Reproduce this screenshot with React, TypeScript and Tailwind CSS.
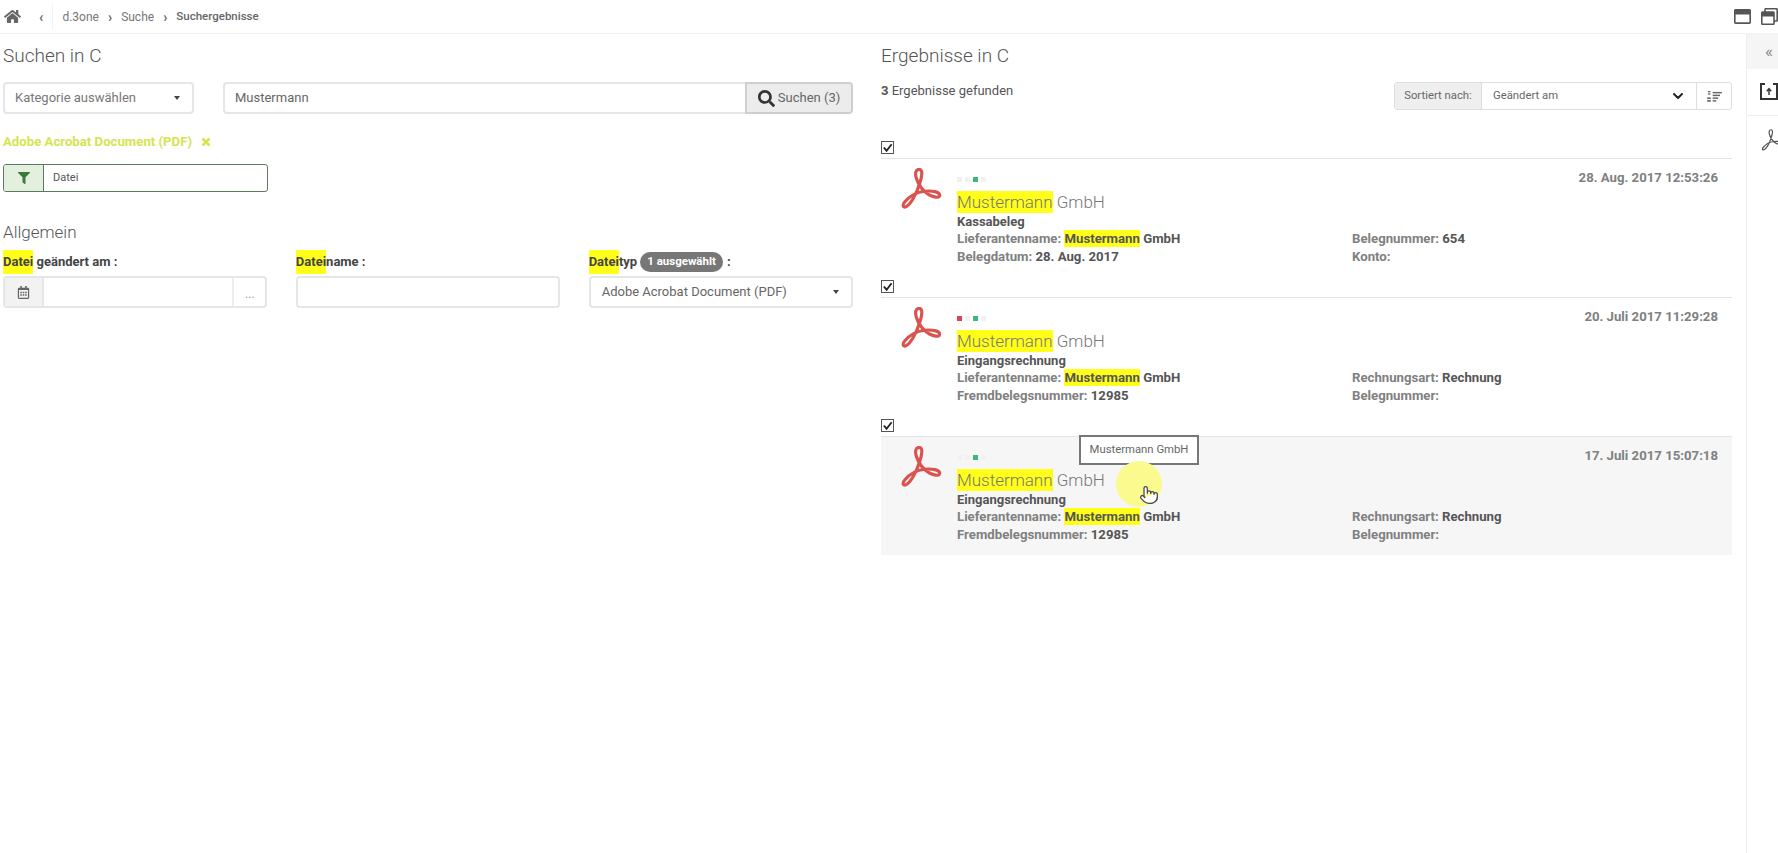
import React from 'react';
import { FaHome, FaFilter, FaSearch, FaRegCalendarAlt, FaRegWindowMaximize, FaRegWindowRestore } from 'react-icons/fa';
import { FiChevronDown } from 'react-icons/fi';
import { Pointer } from 'lucide-react';

const Hl: React.FC<{ children: React.ReactNode; className?: string }> = ({ children, className = 'py-[2px]' }) => (
  <span className={`bg-[#ffff1a] ${className}`}>{children}</span>
);

const AcrobatIcon: React.FC<{ className?: string; width?: number }> = ({ className, width = 3.400 }) => (
  <svg viewBox="0 0 44 44" fill="none" stroke="currentColor" strokeLinejoin="round" className={className}>
    <path d="M20 1.500C16 1.500 15.500 6 17 11C19 18 25 26 31 29C35 31 41.500 33 42 29.500C42.500 25.500 33 24 26 25C17 26 9 31 4.500 36.500C1.500 40 3 43 6 41.500C11 39 17 28 20.500 17C23 9.500 24.500 1.500 20 1.500Z" strokeWidth={width} />
  </svg>
);

const Dots: React.FC<{ first?: boolean }> = ({ first }) => (
  <div className="flex gap-[3px] h-[5px]">
    <span className={`w-[5px] h-[5px] ${first ? 'bg-[#e0434b]' : 'bg-[#f1f1f1]'}`} />
    <span className="w-[5px] h-[5px] bg-[#f1f1f1]" />
    <span className="w-[5px] h-[5px] bg-[#3cb878]" />
    <span className="w-[5px] h-[5px] bg-[#f1f1f1]" />
  </div>
);

type ResultRow = {
  date: string;
  kind: string;
  left: string;
  leftValue: string;
  right1: string;
  right1Value: string;
  right2: string;
  redDot?: boolean;
  hover?: boolean;
};

const rows: ResultRow[] = [
  { date: '28. Aug. 2017 12:53:26', kind: 'Kassabeleg', left: 'Belegdatum:', leftValue: '28. Aug. 2017', right1: 'Belegnummer:', right1Value: '654', right2: 'Konto:' },
  { date: '20. Juli 2017 11:29:28', kind: 'Eingangsrechnung', left: 'Fremdbelegsnummer:', leftValue: '12985', right1: 'Rechnungsart:', right1Value: 'Rechnung', right2: 'Belegnummer:', redDot: true },
  { date: '17. Juli 2017 15:07:18', kind: 'Eingangsrechnung', left: 'Fremdbelegsnummer:', leftValue: '12985', right1: 'Rechnungsart:', right1Value: 'Rechnung', right2: 'Belegnummer:', hover: true },
];

const Result: React.FC<{ row: ResultRow }> = ({ row }) => (
  <div>
    <div className="h-[29px] pt-[11px] border-b border-[#e4e4e4]">
      <div className="w-[13px] h-[13px] border border-[#555] bg-white flex items-center justify-center">
        <svg viewBox="0 0 12 12" className="w-[11px] h-[11px]"><path d="M2 6l3 3.500L10.500 2.500" fill="none" stroke="#222" strokeWidth="2" /></svg>
      </div>
    </div>
    <div className={`relative flex h-[118px] mb-[-8px] pt-[8px] ${row.hover ? 'bg-[#f6f6f7]' : ''}`}>
      <div className="w-[76px] pl-[19px] pt-[1px]">
        <AcrobatIcon className="w-[42px] h-[41px] text-[#d9534f]" />
      </div>
      <div className="flex-1 pt-[10px] pr-[14px] relative">
        <Dots first={row.redDot} />
        <div className="absolute right-[14px] top-[2px] text-[13.200px] font-bold text-[#808080] leading-[18px]">{row.date}</div>
        <div className="mt-[8px] text-[17px] font-light text-[#777] leading-[24px]"><Hl className="py-[1px]">Mustermann</Hl> GmbH</div>
        <div className="text-[13px] font-bold text-[#555] leading-[16px]">{row.kind}</div>
        <div className="grid grid-cols-[395px_1fr] text-[13.200px] font-bold leading-[18px]">
          <div className="text-[#808080]">Lieferantenname: <span className="text-[#555]"><Hl className="py-[1px]">Mustermann</Hl> GmbH</span></div>
          <div className="text-[#808080]">{row.right1} <span className="text-[#555]">{row.right1Value}</span></div>
          <div className="text-[#808080]">{row.left} <span className="text-[#555]">{row.leftValue}</span></div>
          <div className="text-[#808080]">{row.right2}</div>
        </div>
      </div>
      {row.hover && (
        <>
          <div className="absolute left-[198px] top-[-2px] w-[120px] h-[30px] bg-white border-2 border-[#777] text-[11.300px] text-[#666] flex items-center justify-center">Mustermann GmbH</div>
          <div className="absolute left-[235px] top-[24px] w-[46px] h-[46px] rounded-full bg-[#fbfa8e]" />
          <Pointer className="absolute left-[258px] top-[47px] w-[20px] h-[22px] text-[#444]" fill="#fff" strokeWidth={1.500} />
        </>
      )}
    </div>
  </div>
);

export default function App() {
  return (
    <div className="w-[1778px] h-[853px] overflow-hidden bg-white flex flex-col font-['Roboto','Liberation_Sans',sans-serif] text-[#555]">
      <div className="h-[34px] shrink-0 flex items-center border-b border-[#f3f3f3] pl-[4px]">
        <FaHome className="w-[17px] h-[15px] text-[#666]" />
        <span className="ml-[18px] text-[14px] text-[#666] font-bold leading-none">‹</span>
        <span className="ml-[9px] w-px h-[26px] bg-[#f3f3f3]" />
        <span className="ml-[9px] text-[12px] text-[#777]">d.3one</span>
        <span className="mx-[9px] text-[14px] text-[#666] font-bold leading-none">›</span>
        <span className="text-[12px] text-[#777]">Suche</span>
        <span className="mx-[9px] text-[14px] text-[#666] font-bold leading-none">›</span>
        <span className="text-[11.500px] text-[#666] font-medium">Suchergebnisse</span>
        <div className="ml-auto flex items-center gap-[10px]">
          <FaRegWindowMaximize className="w-[17px] h-[17px] text-[#555] shrink-0" />
          <FaRegWindowRestore className="w-[17px] h-[17px] text-[#555] shrink-0" />
        </div>
      </div>

      <div className="flex-1 flex">
        <div className="w-[881px] pl-[3px] pr-[28px] pt-[10px]">
          <h2 className="text-[19px] font-light text-[#555] leading-[24px]">Suchen in C</h2>
          <div className="flex mt-[14px] h-[32px]">
            <div className="w-[191px] border-2 border-[#e6e6e6] rounded-[4px] flex items-center pl-[10px] pr-[12px] text-[13px] text-[#777]">
              Kategorie auswählen
              <span className="ml-auto border-x-[3.500px] border-x-transparent border-t-[4px] border-t-[#444]" />
            </div>
            <div className="ml-[29px] flex-1 border-2 border-r-0 border-[#e6e6e6] rounded-l-[4px] flex items-center pl-[10px] text-[13px] text-[#666]">Mustermann</div>
            <div className="w-[108px] border-2 border-[#cfcfcf] bg-[#ececec] rounded-r-[4px] flex items-center justify-center gap-[3px] text-[13px] text-[#666]">
              <FaSearch className="w-[17px] h-[17px] text-[#333]" />
              Suchen (3)
            </div>
          </div>
          <div className="flex items-center mt-[19px] h-[18px] text-[13.200px] font-bold text-[#d6e44f]">
            Adobe Acrobat Document (PDF)
            <svg viewBox="0 0 10 10" className="ml-[9px] w-[10px] h-[10px]"><path d="M1.500 1.500l7 7M8.500 1.500l-7 7" stroke="currentColor" strokeWidth="2.600" /></svg>
          </div>
          <div className="flex mt-[13px] w-[265px] h-[28px] border border-[#5c7a5c] rounded-[3px] overflow-hidden">
            <div className="w-[40px] bg-[#e2f0dd] border-r border-[#5c7a5c] flex items-center justify-center">
              <FaFilter className="w-[12px] h-[12px] text-[#3e7a3e]" />
            </div>
            <div className="pl-[9px] pt-[1px] flex items-center text-[11px] text-[#555]">Datei</div>
          </div>
          <h3 className="mt-[28px] text-[17px] font-light text-[#555] leading-[24px]">Allgemein</h3>
          <div className="grid grid-cols-3 gap-x-[28.500px] mt-[7px]">
            <div>
              <div className="h-[21px] pt-[1px] flex items-center text-[13px] font-bold text-[#444] whitespace-pre"><Hl>Datei</Hl> geändert am :</div>
              <div className="mt-[4px] h-[32px] flex border-2 border-[#e6e6e6] rounded-[4px]">
                <div className="w-[39px] bg-[#f2f2f2] border-r-2 border-[#e6e6e6] flex items-center justify-center">
                  <FaRegCalendarAlt className="w-[13px] h-[13px] text-[#666]" />
                </div>
                <div className="flex-1" />
                <div className="w-[33px] border-l-2 border-[#eeeeee] flex items-center justify-center text-[12px] text-[#999] pt-[4px]">...</div>
              </div>
            </div>
            <div>
              <div className="h-[21px] pt-[1px] flex items-center text-[13px] font-bold text-[#444] whitespace-pre"><Hl>Datei</Hl>name :</div>
              <div className="mt-[4px] h-[32px] border-2 border-[#e6e6e6] rounded-[4px]" />
            </div>
            <div>
              <div className="h-[21px] pt-[1px] flex items-center text-[13px] font-bold text-[#444] whitespace-pre">
                <Hl>Datei</Hl>typ
                <span className="ml-[3px] mr-[4px] h-[20px] px-[7px] rounded-full bg-[#777] text-white text-[11.500px] flex items-center">1 ausgewählt</span>
                :
              </div>
              <div className="mt-[4px] h-[32px] border-2 border-[#e6e6e6] rounded-[4px] flex items-center pl-[11px] pr-[12px] text-[13px] text-[#666]">
                Adobe Acrobat Document (PDF)
                <span className="ml-auto border-x-[3.500px] border-x-transparent border-t-[4px] border-t-[#444]" />
              </div>
            </div>
          </div>
        </div>

        <div className="w-[851px] pt-[10px]">
          <h2 className="text-[19px] font-light text-[#555] leading-[24px]">Ergebnisse in C</h2>
          <div className="flex items-start justify-between mt-[14px] h-[27px]">
            <div className="text-[13px] text-[#555] leading-[18px]"><b>3</b> Ergebnisse gefunden</div>
            <div className="w-[338px] h-[28px] flex border border-[#dedede] rounded-[3px] text-[11.300px]">
              <div className="w-[87px] bg-[#efefef] border-r border-[#dedede] flex items-center justify-center text-[#666]">Sortiert nach:</div>
              <div className="flex-1 flex items-center pl-[11px] pr-[10px] text-[#666]">
                Geändert am
                <FiChevronDown className="ml-auto w-[16px] h-[16px] text-[#222]" strokeWidth={3} />
              </div>
              <div className="w-[35px] border-l border-[#dedede] flex items-center justify-center">
                <svg viewBox="0 0 16 12" className="w-[15px] h-[11px]" fill="#666">
                  <rect x="1" y="0" width="2.500" height="1.500" />
                  <rect x="1" y="2.500" width="2.500" height="1.500" />
                  <rect x="0" y="7" width="4" height="1.800" />
                  <rect x="0" y="10" width="4" height="1.800" />
                  <rect x="6" y="1" width="10" height="1.600" />
                  <rect x="6" y="4" width="8" height="1.600" />
                  <rect x="6" y="7" width="6" height="1.600" />
                  <rect x="6" y="10" width="4" height="1.600" />
                </svg>
              </div>
            </div>
          </div>
          <div className="mt-[21px]">
            {rows.map(row => <Result key={row.date} row={row} />)}
          </div>
        </div>

        <div className="ml-[14px] flex-1 border-l border-[#eeeeee] overflow-hidden">
          <div className="h-[35px] bg-[#f5f5f5] flex items-center pl-[18px] text-[17px] text-[#888] leading-none">«</div>
          <div className="h-[47px] border-b border-[#eeeeee] pl-[13px] pt-[14px]">
            <svg viewBox="0 0 18 17" className="w-[18px] h-[17px]" fill="none" stroke="#333">
              <path d="M5 1H1v15h16V1h-4" strokeWidth="2" />
              <path d="M9 12V6M6.800 8.200L9 5.500l2.200 2.700" strokeWidth="1.400" />
            </svg>
          </div>
          <div className="pl-[13px] pt-[13px]">
            <AcrobatIcon className="w-[24px] h-[22px] text-[#555]" width={2.400} />
          </div>
        </div>
      </div>
    </div>
  );
}
